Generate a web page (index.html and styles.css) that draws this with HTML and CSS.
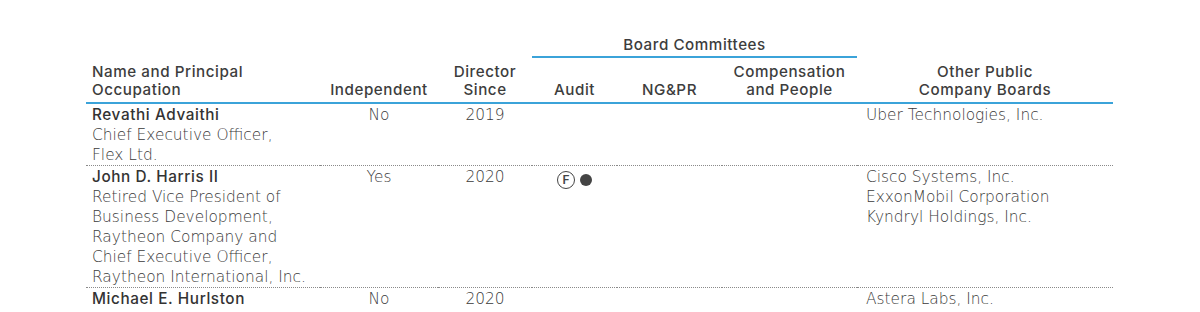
FILE: index.html
```html
<!DOCTYPE html>
<html>
<head>
<meta charset="utf-8">
<link rel="stylesheet" href="styles.css">
</head>
<body>
<div class="page">
<table class="board">
  <colgroup>
    <col class="c-name"><col class="c-ind"><col class="c-dir"><col class="c-audit"><col class="c-ngpr"><col class="c-comp"><col class="c-other">
  </colgroup>
  <thead>
    <tr class="hrow1">
      <th rowspan="2" class="h-name">Name and Principal<br>Occupation</th>
      <th rowspan="2">Independent</th>
      <th rowspan="2">Director<br>Since</th>
      <th colspan="3" class="h-group">Board Committees</th>
      <th rowspan="2">Other Public<br>Company Boards</th>
    </tr>
    <tr class="hrow2">
      <th>Audit</th>
      <th>NG&amp;PR</th>
      <th>Compensation<br>and People</th>
    </tr>
  </thead>
  <tbody>
    <tr>
      <td class="name"><span class="nm">Revathi Advaithi</span>Chief Executive Officer,<br>Flex Ltd.</td>
      <td class="ctr">No</td>
      <td class="ctr">2019</td>
      <td class="ctr"></td>
      <td class="ctr"></td>
      <td class="ctr"></td>
      <td class="other">Uber Technologies, Inc.</td>
    </tr>
    <tr>
      <td class="name"><span class="nm">John D. Harris II</span>Retired Vice President of<br>Business Development,<br>Raytheon Company and<br>Chief Executive Officer,<br>Raytheon International, Inc.</td>
      <td class="ctr">Yes</td>
      <td class="ctr">2020</td>
      <td class="ctr"><span class="marks"><span class="fin">F</span><span class="dot"></span></span></td>
      <td class="ctr"></td>
      <td class="ctr"></td>
      <td class="other">Cisco Systems, Inc.<br>ExxonMobil Corporation<br>Kyndryl Holdings, Inc.</td>
    </tr>
    <tr>
      <td class="name"><span class="nm">Michael E. Hurlston</span>President and Chief Executive Officer,<br>Synaptics Incorporated</td>
      <td class="ctr">No</td>
      <td class="ctr">2020</td>
      <td class="ctr"></td>
      <td class="ctr"></td>
      <td class="ctr"></td>
      <td class="other">Astera Labs, Inc.<br>Synaptics Incorporated</td>
    </tr>
  </tbody>
</table>
</div>
</body>
</html>
```

FILE: styles.css
```css
html, body {
  margin: 0;
  padding: 0;
  background: #ffffff;
}
.page {
  padding: 36px 0 0 86px;
}
.board {
  border-collapse: collapse;
  table-layout: fixed;
  width: 1027px;
  font-family: "DejaVu Sans", "Liberation Sans", sans-serif;
  color: #4d4d4d;
}
.c-name { width: 234px; }
.c-ind { width: 118px; }
.c-dir { width: 94px; }
.c-audit { width: 85px; }
.c-ngpr { width: 105px; }
.c-comp { width: 135px; }
.c-other { width: 256px; }

.board th {
  font-family: "Inter", "DejaVu Sans", sans-serif;
  font-weight: 500;
  font-size: 15.2px;
  letter-spacing: 0.55px;
  line-height: 18px;
  color: #3d3d3d;
  text-align: center;
  vertical-align: bottom;
  padding: 0 0 3px 0;
}
.board th.h-name {
  text-align: left;
  padding-left: 6px;
}
.hrow1 th.h-group {
  border-bottom: 2px solid #3ba3d9;
  padding-bottom: 2px;
}
.hrow2 th {
  padding-top: 5px;
}
thead tr:last-child th,
.hrow1 th[rowspan] {
  border-bottom: 2px solid #3ba3d9;
}
.board td {
  font-size: 15.4px;
  line-height: 20px;
  font-weight: 200;
  color: #3a3a3a;
  vertical-align: top;
  padding: 1px 0 0 0;
  border-bottom: 1px dotted #8a8a8a;
}
.board td.name {
  padding-left: 6px;
}
.board td.ctr {
  text-align: center;
}
.board td.other {
  padding-left: 9px;
}
.nm {
  display: block;
  font-family: "Inter", "DejaVu Sans", sans-serif;
  font-size: 15.3px;
  letter-spacing: 0.6px;
  font-weight: 500;
  line-height: 20px;
  color: #333333;
}
.marks {
  display: inline-flex;
  align-items: center;
  gap: 5px;
  vertical-align: top;
  margin-top: 4px;
}
.fin {
  display: inline-flex;
  align-items: center;
  justify-content: center;
  width: 16px;
  height: 16px;
  border: 1.3px solid #444;
  border-radius: 50%;
  font-family: "Inter", sans-serif;
  font-size: 12px;
  line-height: 1;
  font-weight: 600;
  color: #444;
}
.dot {
  display: inline-block;
  width: 12px;
  height: 12px;
  border-radius: 50%;
  background: #444;
}
```
